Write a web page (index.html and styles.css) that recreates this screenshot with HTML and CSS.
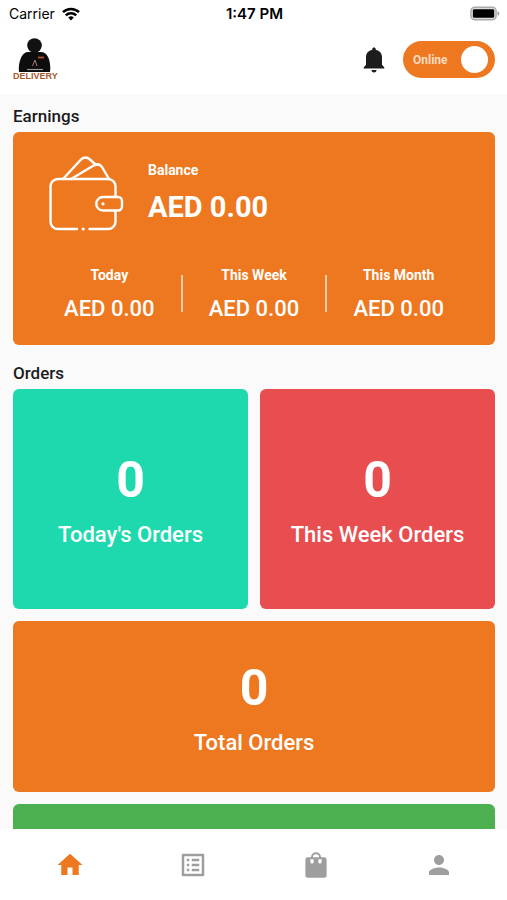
FILE: index.html
```html
<!DOCTYPE html>
<html lang="en">
<head>
<meta charset="utf-8">
<meta name="viewport" content="width=device-width, initial-scale=1">
<title>Delivery</title>
<link rel="stylesheet" href="styles.css">
</head>
<body>
<div class="status">
  <div class="status-left">
    <span>Carrier</span>
    <svg class="wifi" viewBox="0 0 18 14" aria-hidden="true">
      <path d="M1 5.2a11.500 11.500 0 0 1 16 0M3.800 8.400a7.400 7.400 0 0 1 10.400 0" fill="none" stroke="#000" stroke-width="2.500"/>
      <path d="M9 13.600l-2.800-3a4 4 0 0 1 5.600 0z"/>
    </svg>
  </div>
  <time class="clock">1:47 PM</time>
  <div class="status-right">
    <svg class="battery" viewBox="0 0 31 15" aria-hidden="true">
      <rect x="1" y="1" width="26" height="13" rx="4" fill="#ddd" stroke="#aaa" stroke-width="1.500"/>
      <rect x="3" y="3" width="22" height="9" rx="1.500"/>
      <path d="M28.500 5.200c2.400.8 2.400 3.800 0 4.600z" fill="#999"/>
    </svg>
  </div>
</div>

<header class="header">
  <div class="logo">
    <svg class="courier" viewBox="0 0 34 34" aria-hidden="true">
      <circle cx="16.500" cy="7.500" r="7.300" fill="#111"/>
      <path d="M1 34C0 26 3 14 10 14h13c8 0 10 12 9 20z" fill="#0d0d0d"/>
      <path d="M9 31.500h16" stroke="#999" stroke-width="1.200"/>
      <path d="M14.500 28l2.500-6 2 6" fill="none" stroke="#a77a70" stroke-width="1"/>
      <path d="M20 19.500h6" stroke="#b4532a" stroke-width="1.800"/>
    </svg>
    <span class="logo-text">DELIVERY</span>
  </div>
  <button class="bell" type="button" aria-label="Notifications">
    <svg viewBox="0 0 22 26" aria-hidden="true">
      <path d="M11 .5c1 0 1.700.7 1.700 1.600v.6c3.900.8 6.300 3.500 6.300 7.500v7.600l2.300 2.600v1.200H.7v-1.200L3 17.800v-7.600c0-4 2.400-6.700 6.300-7.500v-.6c0-.9.7-1.600 1.700-1.600zM8.500 23h5c0 1.500-1 2.500-2.500 2.500S8.500 24.500 8.500 23z" fill="#1c1c1c"/>
    </svg>
  </button>
  <label class="switch">
    <span>Online</span>
    <input type="checkbox" role="switch" checked>
  </label>
</header>

<main class="content">
  <h2 class="heading">Earnings</h2>
  <section class="earnings">
    <div class="balance">
      <svg class="wallet" viewBox="0 0 76 76" aria-hidden="true">
        <g fill="none" stroke="#fff" stroke-width="2.400" stroke-linecap="round" stroke-linejoin="round">
          <path d="M28 73H9a7.500 7.500 0 0 1-7.500-7.500v-35A7.500 7.500 0 0 1 9 23h50a7.500 7.500 0 0 1 7.500 7.500V41M66.500 54.500v11A7.500 7.500 0 0 1 59 73H40.500"/>
          <path d="M54 41h15a4 4 0 0 1 4 4v5.500a4 4 0 0 1-4 4H54a6.750 6.750 0 0 1 0-13.500z"/>
          <path d="M14 23L32 3.500q4.500-4 9 0l5.500 5M22 23L43 10.500q6.500-4.500 10 .5l7 12"/>
        </g>
        <circle cx="34.200" cy="73" r="1.600" fill="#fff"/>
        <circle cx="54" cy="47.800" r="1.600" fill="#fff"/>
      </svg>
      <div>
        <div class="label">Balance</div>
        <div class="amount-large">AED 0.00</div>
      </div>
    </div>
    <div class="periods">
      <div class="period"><div class="label">Today</div><div class="amount">AED 0.00</div></div>
      <div class="period"><div class="label">This Week</div><div class="amount">AED 0.00</div></div>
      <div class="period"><div class="label">This Month</div><div class="amount">AED 0.00</div></div>
    </div>
  </section>

  <h2 class="heading orders-heading">Orders</h2>
  <section class="orders">
    <div class="tile tile-today"><div class="count">0</div><div class="caption">Today's Orders</div></div>
    <div class="tile tile-week"><div class="count">0</div><div class="caption">This Week Orders</div></div>
    <div class="tile tile-total"><div class="count">0</div><div class="caption">Total Orders</div></div>
    <div class="tile tile-next"></div>
  </section>
</main>

<nav class="tabs">
  <a class="tab active" href="#home" aria-label="Home" aria-current="page">
    <svg viewBox="0 0 24 24"><path d="M10 20v-6h4v6h5v-8h3L12 3 2 12h3v8z"/></svg>
  </a>
  <a class="tab" href="#orders" aria-label="Orders">
    <svg viewBox="0 0 24 24"><path d="M19 5v14H5V5h14m1.100-2H3.900c-.5 0-.9.4-.9.9v16.200c0 .4.4.9.9.9h16.200c.4 0 .9-.5.9-.9V3.900c0-.5-.5-.9-.9-.9zM11 7h6v2h-6V7zm0 4h6v2h-6v-2zm0 4h6v2h-6zM7 7h2v2H7zm0 4h2v2H7zm0 4h2v2H7z"/></svg>
  </a>
  <a class="tab" href="#bag" aria-label="Bag">
    <svg viewBox="0 0 24 24"><path fill-rule="evenodd" d="M8 5.800a4 4 0 0 1 8 0h2.700c1 0 1.800.8 1.800 1.800v12.800c0 1-.8 1.800-1.800 1.800H5.300c-1 0-1.800-.8-1.800-1.800V7.600c0-1 .8-1.800 1.800-1.800zM9.500 5.800h5a2.500 2.500 0 0 0-5 0zM7.500 7.300v2.200a1.300 1.300 0 0 0 2.600 0V7.300zM13.900 7.300v2.200a1.300 1.300 0 0 0 2.600 0V7.300z"/></svg>
  </a>
  <a class="tab" href="#profile" aria-label="Profile">
    <svg viewBox="0 0 24 24"><path d="M12 12c2.210 0 4-1.790 4-4s-1.790-4-4-4-4 1.790-4 4 1.790 4 4 4zm0 2c-2.670 0-8 1.340-8 4v2h16v-2c0-2.660-5.330-4-8-4z"/></svg>
  </a>
</nav>
</body>
</html>
```

FILE: styles.css
```css
* {
  box-sizing: border-box;
}

body {
  margin: 0;
  height: 100vh;
  display: flex;
  flex-direction: column;
  overflow: hidden;
  background: #fff;
  color: #1c1c1e;
  font-family: Roboto, sans-serif;
}

svg {
  display: block;
}

.status {
  flex: none;
  display: grid;
  grid-template-columns: 1fr auto 1fr;
  align-items: center;
  height: 27px;
  padding: 0 7px 0 9px;
  font-family: Inter, sans-serif;
  font-size: 14px;
  color: #000;
}

.status-left {
  display: flex;
  align-items: center;
  gap: 7px;
}

.wifi {
  width: 18px;
  height: 14px;
}

.clock {
  font-size: 15px;
  font-weight: 600;
}

.status-right {
  display: flex;
  justify-content: flex-end;
}

.battery {
  width: 30px;
  height: 15px;
}

.header {
  flex: none;
  display: flex;
  align-items: center;
  height: 67px;
  padding: 0 12px 2px 13px;
}

.logo {
  margin-right: auto;
}

.courier {
  width: 34px;
  height: 34px;
  margin-left: 5px;
}

.logo-text {
  display: block;
  font-family: "Liberation Sans", sans-serif;
  font-size: 9px;
  font-weight: 700;
  line-height: 9px;
  color: #a9572c;
}

.bell {
  margin-right: 18px;
  padding: 0;
  border: 0;
  background: none;
}

.bell svg {
  width: 22px;
  height: 26px;
}

.switch {
  display: flex;
  align-items: center;
  justify-content: space-between;
  width: 92px;
  height: 37px;
  padding: 0 7px 0 10px;
  border-radius: 19px;
  background: #ee7820;
  color: #fcdcc2;
  font-size: 12px;
  font-weight: 700;
}

.switch input {
  appearance: none;
  width: 27px;
  height: 27px;
  margin: 0;
  border-radius: 50%;
  background: #fff;
}

.content {
  flex: 1;
  min-height: 0;
  overflow: hidden;
  padding: 12px 12px 0 13px;
  background: #fafafa;
}

.heading {
  margin: 0 0 6px;
  font-size: 17px;
  font-weight: 500;
  line-height: 20px;
}

.earnings {
  padding: 24px 24px 22px;
  border-radius: 6px;
  background: #ee7820;
  color: #fff;
}

.balance {
  display: flex;
  gap: 23px;
  padding-left: 12px;
}

.wallet {
  width: 76px;
  height: 76px;
}

.label {
  padding-top: 4px;
  font-size: 14px;
  font-weight: 700;
  line-height: 20px;
}

.amount-large {
  padding-top: 9px;
  font-size: 29px;
  font-weight: 700;
  line-height: 36px;
}

.periods {
  display: grid;
  grid-template-columns: repeat(3, 1fr);
  margin-top: 29px;
  text-align: center;
}

.period {
  position: relative;
}

.period + .period::before {
  content: "";
  position: absolute;
  left: -1px;
  top: 14px;
  width: 2px;
  height: 37px;
  background: #f9cda8;
}

.amount {
  padding-top: 10px;
  font-size: 22px;
  font-weight: 500;
  line-height: 28px;
}

.orders-heading {
  margin-top: 18px;
}

.orders {
  display: grid;
  grid-template-columns: 1fr 1fr;
  grid-template-rows: 220px 171px 171px;
  gap: 12px;
}

.tile {
  display: flex;
  flex-direction: column;
  align-items: center;
  justify-content: center;
  padding-top: 2px;
  border-radius: 6px;
  color: #fff;
}

.tile-today {
  background: #1fd9ae;
}

.tile-week {
  background: #e84e50;
}

.tile-total {
  grid-column: 1 / -1;
  background: #ee7820;
}

.tile-next {
  grid-column: 1 / -1;
  background: #4caf50;
}

.count {
  font-size: 50px;
  font-weight: 700;
  line-height: 58px;
}

.caption {
  padding-top: 12px;
  font-size: 22px;
  font-weight: 500;
  line-height: 28px;
}

.tabs {
  flex: none;
  display: grid;
  grid-template-columns: repeat(4, 1fr);
  height: 71px;
  padding: 21px 6px 0 8px;
  background: #fff;
}

.tab {
  justify-self: center;
  color: #9e9e9e;
}

.tab svg {
  width: 30px;
  height: 30px;
  fill: currentColor;
}

.active {
  color: #ee7820;
}
```
